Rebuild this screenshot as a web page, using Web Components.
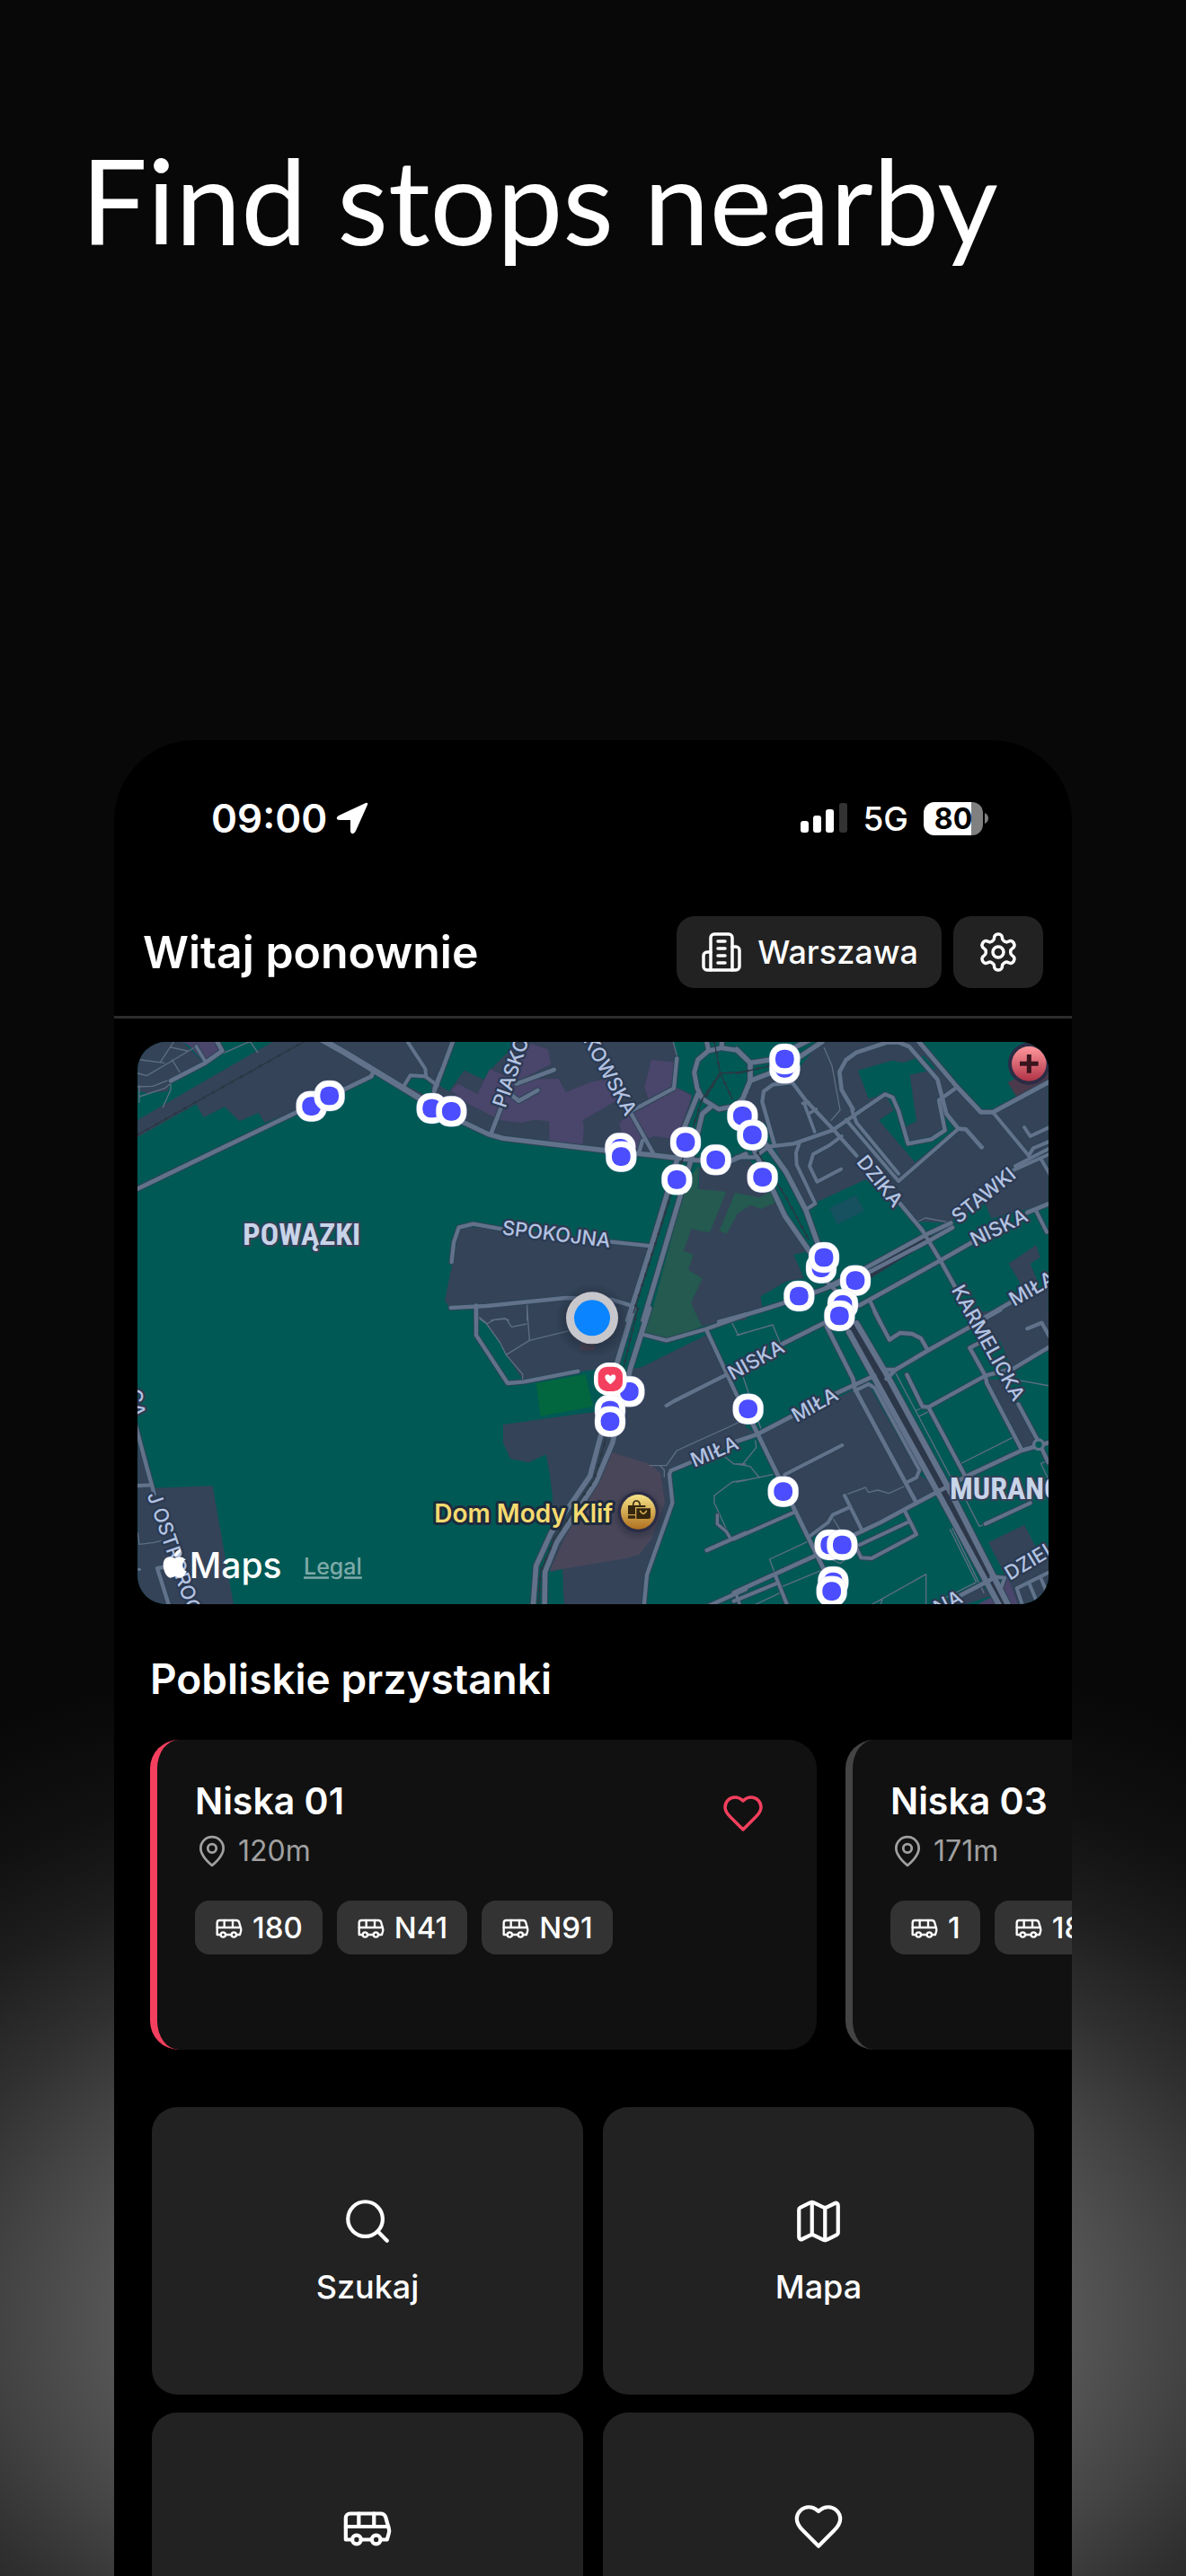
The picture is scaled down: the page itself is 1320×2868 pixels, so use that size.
<!DOCTYPE html>
<html lang="pl">
<head>
<meta charset="utf-8">
<meta name="viewport" content="width=device-width, initial-scale=1">
<title>Find stops nearby</title>
<style>
    body {
        margin: 0;
        background: #080808;
        color: #fff;
        font-family: Inter, "Noto Sans", sans-serif;
    }
</style>
</head>
<body>
<promo-page>
    <h1 slot="title">Find stops nearby</h1>
    <phone-frame>
        <status-bar time="09:00" network="5G" battery="80"></status-bar>
        <app-header city="Warszawa">Witaj ponownie</app-header>
        <nearby-map></nearby-map>
        <stop-list heading="Pobliskie przystanki">
            <stop-card name="Niska 01" distance="120m" lines="180,N41,N91" favourite></stop-card>
            <stop-card name="Niska 03" distance="171m" lines="1,180,N41"></stop-card>
        </stop-list>
        <tile-grid>
            <action-tile icon="search">Szukaj</action-tile>
            <action-tile icon="map">Mapa</action-tile>
            <action-tile icon="bus" label="Linie"></action-tile>
            <action-tile icon="heart" label="Ulubione"></action-tile>
        </tile-grid>
    </phone-frame>
</promo-page>

<script>
const ICONS = {
    building: `<path d="M6 22V4a2 2 0 0 1 2-2h8a2 2 0 0 1 2 2v18Z"/><path d="M6 12H4a2 2 0 0 0-2 2v6a2 2 0 0 0 2 2h2"/><path d="M18 9h2a2 2 0 0 1 2 2v9a2 2 0 0 1-2 2h-2"/><path d="M10 6h4M10 10h4M10 14h4M10 18h4"/>`,
    settings: `<path d="M12.22 2h-.44a2 2 0 0 0-2 2v.18a2 2 0 0 1-1 1.73l-.43.25a2 2 0 0 1-2 0l-.15-.08a2 2 0 0 0-2.73.73l-.22.38a2 2 0 0 0 .73 2.73l.15.1a2 2 0 0 1 1 1.72v.51a2 2 0 0 1-1 1.74l-.15.09a2 2 0 0 0-.73 2.73l.22.38a2 2 0 0 0 2.73.73l.15-.08a2 2 0 0 1 2 0l.43.25a2 2 0 0 1 1 1.73V20a2 2 0 0 0 2 2h.44a2 2 0 0 0 2-2v-.18a2 2 0 0 1 1-1.73l.43-.25a2 2 0 0 1 2 0l.15.08a2 2 0 0 0 2.73-.73l.22-.39a2 2 0 0 0-.73-2.73l-.15-.08a2 2 0 0 1-1-1.74v-.5a2 2 0 0 1 1-1.74l.15-.09a2 2 0 0 0 .73-2.73l-.22-.38a2 2 0 0 0-2.73-.73l-.15.08a2 2 0 0 1-2 0l-.43-.25a2 2 0 0 1-1-1.73V4a2 2 0 0 0-2-2z"/><circle cx="12" cy="12" r="3"/>`,
    pin: `<path d="M20 10c0 6-8 12-8 12s-8-6-8-12a8 8 0 0 1 16 0Z"/><circle cx="12" cy="10" r="3"/>`,
    bus: `<path d="M8 6v6M15 6v6M2 12h19.6"/><path d="M18 18h3s.5-1.7.8-2.8c.1-.4.2-.8.2-1.2 0-.4-.1-.8-.2-1.2l-1.4-5C20.1 6.8 19.1 6 18 6H4a2 2 0 0 0-2 2v10h3"/><circle cx="7" cy="18" r="2"/><path d="M9 18h5"/><circle cx="16" cy="18" r="2"/>`,
    search: `<circle cx="11" cy="11" r="8"/><path d="m21 21-4.3-4.3"/>`,
    map: `<path d="M14.106 5.553a2 2 0 0 0 1.788 0l3.659-1.83A1 1 0 0 1 21 4.619v12.764a1 1 0 0 1-.553.894l-4.553 2.277a2 2 0 0 1-1.788 0l-4.212-2.106a2 2 0 0 0-1.788 0l-3.659 1.83A1 1 0 0 1 3 19.381V6.618a1 1 0 0 1 .553-.894l4.553-2.277a2 2 0 0 1 1.788 0z"/><path d="M15 5.764v15M9 3.236v15"/>`,
    heart: `<path d="M19 14c1.49-1.46 3-3.21 3-5.5A5.5 5.5 0 0 0 16.5 3c-1.76 0-3 .5-4.5 2-1.5-1.5-2.74-2-4.5-2A5.5 5.5 0 0 0 2 8.5c0 2.3 1.5 4.05 3 5.5l7 7Z"/>`
};

class AppIcon extends HTMLElement {
    constructor() {
        super();
        this.attachShadow({mode: "open"});
    }

    connectedCallback() {
        this.shadowRoot.innerHTML = `
        <style>
            :host { display: inline-flex; flex: none; width: 48px; height: 48px; }
            svg { width: 100%; height: 100%; }
        </style>
        <svg viewBox="0 0 24 24" fill="none" stroke="currentColor" stroke-width="1.75"
            stroke-linecap="round" stroke-linejoin="round" aria-hidden="true">${ICONS[this.getAttribute("name")]}</svg>`;
    }
}

class PromoPage extends HTMLElement {
    constructor() {
        super();
        this.attachShadow({mode: "open"}).innerHTML = `
        <style>
            :host {
                display: flex;
                flex-direction: column;
                height: 100vh;
                overflow: hidden;
                background: radial-gradient(91% 25% at 50% 90%,
                    #5c5c5c 38%, #545454 45%, #434343 55%, #303030 65%, #1d1d1d 78%, #111 90%, #080808 108%);
            }
            header {
                padding: 145px 90px 523px;
            }
            ::slotted(h1) {
                margin: 0;
                font: 400 131px/156px Lato, "Open Sans", sans-serif;
            }
            main {
                display: flex;
                flex: 1;
                min-height: 0;
                padding: 0 127px;
            }
        </style>
        <header><slot name="title"></slot></header>
        <main><slot></slot></main>`;
    }
}

class PhoneFrame extends HTMLElement {
    constructor() {
        super();
        this.attachShadow({mode: "open"}).innerHTML = `
        <style>
            :host {
                display: block;
                flex: 1;
                min-width: 0;
                overflow: hidden;
                background: #000;
                border-radius: 90px 90px 0 0;
            }
        </style>
        <slot></slot>`;
    }
}

class StatusBar extends HTMLElement {
    constructor() {
        super();
        this.attachShadow({mode: "open"});
    }

    connectedCallback() {
        this.shadowRoot.innerHTML = `
        <style>
            :host {
                display: flex;
                align-items: center;
                justify-content: space-between;
                height: 174px;
                padding: 0 93px 0 108px;
            }
            div { display: flex; align-items: center; }
            .time { gap: 10px; font-size: 44px; font-weight: 600; }
            .state { gap: 17px; font-size: 37px; font-weight: 500; }
            .battery { gap: 2px; }
            .level {
                justify-content: center;
                width: 66px;
                height: 37px;
                border-radius: 12px;
                background: linear-gradient(90deg, #fff 80%, #808080 80%);
                color: #000;
                font-size: 32px;
                font-weight: 700;
            }
        </style>
        <div class="time">
            <span>${this.getAttribute("time")}</span>
            <svg width="36" height="36" viewBox="0 0 36 36" fill="#fff" aria-hidden="true"><path d="M33 1 3 15q-3 2-2 4 1 1 4 1h11v11q0 4 2 4 2 1 4-3L35 3q1-3-2-2Z"/></svg>
        </div>
        <div class="state">
            <svg width="52" height="34" viewBox="0 0 52 34" fill="#fff" aria-hidden="true">
                <rect y="20" width="9" height="13" rx="3"/><rect x="14" y="14" width="9" height="19" rx="3"/>
                <rect x="28" y="7" width="9" height="26" rx="3"/><rect x="43" width="9" height="33" rx="3" fill="#333"/>
            </svg>
            <span>${this.getAttribute("network")}</span>
            <div class="battery">
                <div class="level">${this.getAttribute("battery")}</div>
                <svg width="4" height="12" viewBox="0 0 4 12" fill="#808080" aria-hidden="true"><path d="M0 0q4 2 4 6t-4 6Z"/></svg>
            </div>
        </div>`;
    }
}

class AppHeader extends HTMLElement {
    constructor() {
        super();
        this.attachShadow({mode: "open"});
    }

    connectedCallback() {
        this.shadowRoot.innerHTML = `
        <style>
            :host {
                display: flex;
                align-items: center;
                gap: 13px;
                padding: 22px 32px 31px;
                border-bottom: 3px solid #2c2c2c;
            }
            h2 {
                flex: 1;
                margin: 0;
                font-size: 50px;
                font-weight: 600;
                line-height: 60px;
            }
            button {
                display: flex;
                align-items: center;
                gap: 16px;
                height: 80px;
                padding: 0 26px;
                border: 0;
                border-radius: 20px;
                background: #222;
                color: #fff;
                font: 500 36px/44px Inter, sans-serif;
            }
        </style>
        <h2><slot></slot></h2>
        <button type="button"><app-icon name="building"></app-icon>${this.getAttribute("city")}</button>
        <button type="button" aria-label="Ustawienia"><app-icon name="settings"></app-icon></button>`;
    }
}

/* Map data: the city is split in six sheets, each drawn from its own origin.
   Three map units are one pixel at full size. */
const NAVY = "#344358", TEAL = "#005955", PURPLE = "#4a456b", PARK = "#245a50";

const SHEETS = [
    {
        x: -39, y: -60,
        areas: [
            [NAVY, "M40 60H190L260 130 150 195 140 225 75 232 40 225Z"],
            [NAVY, "M40 320 490 60H1050V290L830 165 570 290 463 330 443 297 380 325 330 277 260 312 235 268 40 378Z"],
            [PURPLE, "M190 60H310L322 90 262 132 215 75Z"],
            [TEAL, "M935 205 960 177 1000 180 1030 212 1015 245Z"]
        ],
        rails: ["M40 370 620 45"],
        thin: ["M40 165 70 173 160 120 230 78M50 120 128 130M160 60 115 128M150 78 205 90M155 120 185 170M40 210 90 208 150 185M45 243 130 215 160 190M150 195V220L124 278M45 205V262M325 98 415 58 440 95"],
        roads: [
            [14, "M30 555 570 295 820 175 828 155"],
            [20, "M650 50 730 95 1050 290"],
            [14, "M300 50 322 90 262 132 150 190"],
            [11, "M235 75 265 125"],
            [12, "M938 55 1000 150 1003 178M930 205 950 172 1000 175 1040 205M1050 165 1030 215"]
        ],
        stops: [[620, 275], [680, 240], [1022, 282]]
    },
    {
        x: 981, y: -60,
        areas: [
            [NAVY, "M0 60H80L15 210 0 200Z"],
            [NAVY, "M290 60H810L820 110 815 210 870 235 840 445 740 435 240 380 120 325 0 250V190L60 225 110 155 175 185 200 150Z"],
            [PURPLE, "M330 65 390 85 400 135 300 185 425 183 450 228 530 195 600 180 620 255 505 322 510 345 505 405 395 395 393 325 345 320 300 330 230 322 120 265 65 222 90 200 155 235 195 150 250 175Z"],
            [PURPLE, "M735 120 815 128V212L870 240 820 385 745 375 720 385 700 430 635 365 628 330 665 300 730 265 712 210Z"],
            [PARK, "M895 470 890 550 1050 560V990H730L850 530Z"],
            [NAVY, "M895 480 1050 440V990H890L868 930 905 850 858 822 875 770 842 758 868 685 930 697 985 560 893 552Z"],
            [PARK, "M1015 563 1050 570V630L1020 640 985 702 962 690Z"],
            [NAVY, "M95 680H235L740 740 665 990H150V945H60L45 925 70 800Z"]
        ],
        rails: ["M945 60 965 165 905 250 830 480 675 965M965 165 1050 160M965 165 1005 250M920 240 965 165"],
        thin: ["M320 935V990M200 990 245 983 260 990M155 975 185 1000M808 60 822 112"],
        roads: [
            [16, "M0 245 100 325 190 368 240 382 560 420 740 438 880 455 1000 458 1050 435"],
            [14, "M75 50 10 225M235 275 200 365M285 200 410 153M265 235 292 257 355 222"],
            [13, "M820 115 810 215 665 292M665 295 740 430M705 390 695 425"],
            [15, "M1020 88 1065 130V190L1040 250 1010 275 960 285 905 250 888 215 878 162 890 120 925 90 970 80 1020 88M918 50 925 85M970 50V80"],
            [16, "M890 235 845 345 820 455 785 575 735 740 665 960 655 990M935 275 905 300 870 445 830 580 708 990"],
            [13, "M68 795 75 730 92 680 140 668 235 685M600 728 735 742M65 948 185 942 450 915 600 920 665 940M150 945V995M1050 970 960 995"]
        ],
        stops: [[67, 292], [631, 415], [634, 443], [849, 395], [820, 520], [950, 454]]
    },
    {
        x: 2001, y: -60,
        areas: [
            [NAVY, "M280 60H600L820 298H860L1040 200V600L850 650 830 600 700 665 605 660 550 610 430 520 235 610 130 420 85 260 90 220 180 180Z"],
            [TEAL, "M405 155 520 122 555 130 625 105 665 150 578 170 600 325 560 345 572 390 650 375 690 345 690 300 740 350 595 462 475 322 525 288 495 235 440 250Z"],
            [NAVY, "M50 195 110 175 190 185 90 220 110 330 60 340 20 250Z"],
            [NAVY, "M0 455H45L130 590 240 760 190 770 225 850 165 860 80 910 85 945 0 975Z"],
            [PARK, "M0 565 75 580 110 560 135 595 80 618 45 605 0 635Z"],
            ["#17505f", "M310 615 398 572 425 625 335 670Z"],
            ["#4a3a4c", "M905 195 1040 130V195L935 245Z"],
            [NAVY, "M908 800 1000 738 1013 780 980 800 1005 860 960 890Z"],
            [NAVY, "M820 990 1040 870V990Z"]
        ],
        rails: ["M70 430 165 580 240 720M0 165 180 125"],
        thin: ["M292 80 318 140 345 288 315 322M605 660 630 648 705 662"],
        roads: [
            [16, "M0 85 45 130 110 120 250 50M45 130V190L20 250M45 190 150 150 285 60"],
            [13, "M125 400 85 260 90 225 120 203 185 195 230 255 320 350 400 440M545 600 620 690 680 790 730 880"],
            [17, "M100 405 165 495 230 620 280 760M60 425 160 640 250 770"],
            [13, "M0 445 60 445 105 410 190 400 320 355 495 235 520 245 540 290 572 400 650 385 695 355 675 255 730 215"],
            [11, "M220 265 240 262 M225 265 260 360M240 300 265 285"],
            [12, "M350 375 310 405 255 435 243 475 268 527 348 485M210 395 198 430 200 470 262 600 230 620"],
            [14, "M388 285 350 220 343 160 365 120 400 95 500 62 540 62 575 75 670 185 700 300 740 350 765 352 818 412"],
            [12, "M385 290 400 330 540 500M365 320 540 525 735 355"],
            [15, "M600 50 735 210 815 295H855L1050 190"],
            [12, "M855 295 975 440 990 415 1050 390M960 345 980 375 1050 342M930 475 1050 412M920 490 1050 432M1015 450 1050 510M1000 625 1035 695"],
            [14, "M715 665 640 700 440 810 300 880M720 680 640 725 450 825 240 905"],
            [14, "M1050 597 970 630M785 730 680 790 410 940M0 980 100 950 180 925 260 895M820 985 915 930"],
            [12, "M445 925 480 1000M290 850 340 900"]
        ],
        stops: [[160, 148], [160, 117], [19, 307], [52, 371], [86, 512], [282, 815], [291, 780], [208, 909], [396, 857], [354, 937], [343, 975]]
    },
    {
        x: -39, y: 900,
        areas: [
            [NAVY, "M40 380 90 590 290 583 360 980H40Z"]
        ],
        rails: [],
        thin: ["M40 740 45 778 95 772 140 760"],
        roads: [
            [13, "M30 370 70 520 95 610M30 583 80 580M135 853 105 858 145 985"],
            [10, "M44 862 46 862"]
        ],
        stops: []
    },
    {
        x: 981, y: 900,
        areas: [
            [NAVY, "M150 0H680L620 190 545 195 305 228 250 145 230 105 185 45 155 20Z"],
            [PARK, "M733 0H880L905 50 785 97 710 75Z"],
            [NAVY, "M880 0H1050V10L905 50Z"],
            ["#02663f", "M350 240 515 210 540 318 365 350Z"],
            [NAVY, "M240 378 550 335 660 195 705 185 920 78 1030 290H1050V430L865 510 790 540 805 640 720 880 710 980H443L438 860 400 870 405 620 395 540 383 478 325 505 265 493 240 440Z"],
            ["#4a465a", "M600 470 730 510 765 540 780 640 735 760 695 812 650 825 395 868 500 640Z"],
            ["#4a4150", "M498 105H545V130H498Z"]
        ],
        rails: ["M690 -10 590 400 545 560 410 760 365 870 358 980"],
        thin: ["M155 20 185 42 230 105 250 145 305 210V228M185 42 210 28 250 25 268 52 318 42M320 -10 328 97 250 145M328 97 460 65M1050 360 985 390 820 465 785 515H730M765 517 778 530V552M980 485 1010 510H1050M1050 563 1005 570 945 615V640L1000 760M1000 30 1025 80 1050 70"],
        roads: [
            [17, "M675 -10 615 190 570 400 530 550 400 740 350 850 340 985M728 -10 665 190 605 440 550 570 420 770 380 870 378 985"],
            [13, "M150 -20V80L255 240 310 235 490 200M710 78 785 97 915 60 1050 12M920 65 1020 280M785 315 810 300 985 212"],
            [13, "M865 505 800 532 795 545 805 640 720 880 710 985M920 798 1050 740M930 982 1050 928"],
            [10, "M955 680V710L985 735 1000 760M1020 950 1032 985"]
        ],
        stops: [[661, 268], [597, 330], [597, 368]]
    },
    {
        x: 2001, y: 900,
        areas: [
            [NAVY, "M0 370 60 405 0 430Z"],
            [NAVY, "M70 415 395 260 440 245 610 545 680 600 600 640 415 735 300 745 240 750Z"],
            [NAVY, "M750 0H1050V120L925 205 880 100 800 70Z"],
            [NAVY, "M830 225 890 230 1000 440 950 465Z"],
            [NAVY, "M840 772 960 713 1000 790 890 870Z"],
            [NAVY, "M890 870 1050 780V980H935Z"],
            [NAVY, "M690 980 820 915 850 950 760 980Z"],
            [PURPLE, "M800 980 850 955 905 890 940 980Z"]
        ],
        rails: [],
        thin: ["M530 205 715 555M600 330 640 315M610 350 640 335M745 510 920 422M760 620 810 718 850 700M712 728 800 905M720 725 825 940M800 905 690 960M110 828 235 770M110 828 125 870M320 690 345 730M370 610 430 588 440 605 470 597 508 608 565 582M0 570 120 545M0 510 45 518 75 555M20 510 65 455 62 432M0 80 120 45 145 105M20 215 80 390M150 920 290 862M632 980V878L450 980M488 958 480 980M320 830 345 842 360 830M940 230 1050 250M1035 500 1015 508 1040 560M60 980 150 938"],
        roads: [
            [14, "M300 50 388 225 395 260 600 640M150 110 300 35M-10 437 70 410 185 350M330 275 460 215"],
            [12, "M395 265 440 243 460 255 610 530 600 555 570 570"],
            [14, "M490 195H530L640 130 880 -5M500 225 530 195"],
            [13, "M460 0 510 95 545 72 585 75 615 90 635 125"],
            [14, "M1050 436 950 465 780 545 600 640 480 705 395 745"],
            [13, "M568 212 620 318 640 320 830 215 925 190 1050 115M640 320 760 545M805 108 778 122 830 215 835 240 950 460M940 310 1010 440 1040 505M970 58 1018 38 1045 85"],
            [12, "M830 710 980 640M160 545 352 447M-10 760 190 672M245 750 305 705 320 680 375 655M360 615 420 735"],
            [14, "M40 350 70 410 290 860M265 815 -10 940"],
            [12, "M130 910 -10 968M130 885 170 985M410 780 570 705M560 665 600 745 450 825 415 823 395 780"],
            [14, "M740 952 850 895"],
            [12, "M850 885 895 890 880 930M1050 868 935 925 955 985M975 905 1008 985M1015 890 1040 950"],
            [19, "M375 70 680 620 878 985M400 40 500 210 712 600 908 985"]
        ],
        stops: [[38, 326], [155, 602], [311, 780], [352, 780], [322, 903], [317, 935]]
    }
];

// text, sheet, x, y, angle, anchor
const STREETS = [
    ["PIASKOWA", 1, 226, 276, -71, "start"],
    ["OKOWSKA", 1, 668, 300, 61, "end"],
    ["SPOKOJNA", 1, 418, 702, 7, "middle"],
    ["DZIKA", 2, 478, 525, 51, "middle"],
    ["STAWKI", 2, 824, 572, -39, "middle"],
    ["NISKA", 2, 875, 680, -26, "middle"],
    ["MIŁA", 2, 915, 925, -30, "start"],
    ["KARMELICKA", 2, 840, 1065, 61, "middle"],
    ["CA", 3, 42, 352, 82, "end"],
    ["J OSTROROGA", 3, 92, 605, 71, "start"],
    ["NISKA", 4, 1084, 162, -29, "middle"],
    ["MIŁA", 4, 945, 468, -23, "middle"],
    ["MIŁA", 5, 260, 312, -29, "middle"],
    ["DZIELNA", 5, 900, 880, -31, "start"],
    ["NA", 5, 748, 950, -27, "end"]
];

class NearbyMap extends HTMLElement {
    constructor() {
        super();
        this.attachShadow({mode: "open"});
    }

    connectedCallback() {
        const layer = draw => SHEETS.map(s => `<g transform="translate(${s.x} ${s.y})">${draw(s)}</g>`).join("");
        const areas = layer(s => s.areas.map(([fill, d]) => `<path fill="${fill}" d="${d}"/>`).join(""));
        const thin = layer(s => s.thin.map(d => `<path class="thin" d="${d}"/>`).join(""));
        const rails = layer(s => s.rails.map(d => `<path class="rail" d="${d}"/><path class="ties" d="${d}"/>`).join(""));
        const casing = layer(s => s.roads.map(([w, d]) => `<path class="casing" stroke-width="${w + 6}" d="${d}"/>`).join(""));
        const roads = layer(s => s.roads.map(([w, d]) => `<path class="road" stroke-width="${w}" d="${d}"/>`).join(""));
        const stops = layer(s => s.stops.map(([x, y]) => `
            <rect x="${x - 51}" y="${y - 51}" width="102" height="102" rx="45" fill="#fff" stroke="#c9c8f5" stroke-width="1"/>
            <rect x="${x - 31}" y="${y - 31}" width="62" height="62" rx="27" fill="#4b4dff"/>`).join(""));
        const streets = STREETS.map(([text, sheet, x, y, angle, anchor]) => `
            <text class="street" text-anchor="${anchor}" transform="translate(${SHEETS[sheet].x + x} ${SHEETS[sheet].y + y}) rotate(${angle})" dy="23">${text}</text>`).join("");

        this.shadowRoot.innerHTML = `
        <style>
            :host {
                display: block;
                margin: 26px 26px 0;
                overflow: hidden;
                border-radius: 32px;
            }
            svg { display: block; width: 100%; background: ${TEAL}; }
            path { stroke-linecap: round; stroke-linejoin: round; }
            .thin { fill: none; stroke: #5d6e82; stroke-width: 4; }
            .rail { fill: none; stroke: #2a3844; stroke-width: 4; }
            .ties { fill: none; stroke: #2a3844; stroke-width: 9; stroke-dasharray: 1 35; }
            .casing { fill: none; stroke: #2d4556; }
            .road { fill: none; stroke: #61728a; }
            .avenue { fill: none; stroke: #2c3749; stroke-width: 24; }
            text { paint-order: stroke; stroke-linejoin: round; }
            .street { font: 500 66px Inter, sans-serif; fill: #b3c3e2; stroke: #2b3a52; stroke-width: 14px; }
            .district { font: 700 102px "Liberation Sans Narrow", "Roboto Condensed", Roboto, sans-serif; fill: #c8d4e8; stroke: #344159; stroke-width: 12px; }
            .place { font: 600 84px Inter, sans-serif; fill: #f5db70; stroke: #1d2b3d; stroke-width: 18px; }
            .brand { font: 500 117px Inter, sans-serif; fill: #fff; }
            .legal { font: 500 75px Inter, sans-serif; fill: #7eaaa8; text-decoration: underline; }
        </style>
        <svg viewBox="0 0 3042 1878" role="group" aria-label="Mapa okolicy">
            <defs>
                <linearGradient id="gold" x2="0" y2="1"><stop stop-color="#f6e387"/><stop offset="1" stop-color="#b0701f"/></linearGradient>
                <linearGradient id="red" x2="0" y2="1"><stop stop-color="#ff989c"/><stop offset="1" stop-color="#b03347"/></linearGradient>
                <radialGradient id="shade"><stop offset=".5" stop-color="#1c2535" stop-opacity=".6"/><stop offset="1" stop-color="#1c2535" stop-opacity="0"/></radialGradient>
            </defs>
            ${areas}${thin}${casing}
            <path class="avenue" d="M2389 955 2694 1500 2894 1885M2440 780 2640 655"/>
            ${roads}${rails}
            <circle cx="3009" cy="1345" r="16" fill="${TEAL}" stroke="#61728a" stroke-width="10"/>
            ${streets}
            <text class="district" x="352" y="677">POWĄZKI</text>
            <text class="district" x="2712" y="1528">MURANÓW</text>
            <g transform="translate(2977 73)">
                <circle r="70" fill="#2b2c45"/><circle r="58" fill="url(#red)"/>
                <path d="M-31 0H31M0 -31V31" stroke="#39151d" stroke-width="15" style="stroke-linecap:butt"/>
            </g>
            <g transform="translate(1672 1570)">
                <circle r="90" cy="8" fill="url(#shade)"/><circle r="68" fill="#2b2c45"/><circle r="58" fill="url(#gold)"/>
                <path d="M-34 -22H24V-16H-10V8H-34ZM-34 12H-10V22H-34ZM-6 -12H41V17Q41 23 35 23H-6Z" fill="#33260d"/>
                <path d="M-17 -22Q-17 -37 -6 -37T6 -22" fill="none" stroke="#33260d" stroke-width="5"/>
                <path d="M7 -3Q17 15 27 -3" fill="none" stroke="#dcb454" stroke-width="5"/>
            </g>
            <text class="place" x="991" y="1605">Dom Mody Klif</text>
            ${stops}
            <g transform="translate(1579 1126)">
                <rect x="-55" y="-55" width="110" height="110" rx="48" fill="#fff"/>
                <rect x="-41" y="-41" width="82" height="82" rx="30" fill="#f43f5e"/>
                <path d="M0 18C-12 8 -18 2 -18 -6 -18 -17 -5 -18 0 -9 5 -18 18 -17 18 -6 18 2 12 8 0 18Z" fill="#fff"/>
            </g>
            <circle cx="1518" cy="930" r="125" fill="url(#shade)"/>
            <circle cx="1518" cy="922" r="87" fill="#c7c7cc"/>
            <circle cx="1518" cy="922" r="60" fill="#0a84ff"/>
            <path transform="translate(86 1695)" fill="#fff" d="M58 0C59 11 50 23 38 23 37 11 47 1 58 0ZM72 32C66 27 59 25 54 25 48 25 43 29 38 29 33 29 28 25 21 25 9 25 0 36 0 52 0 72 12 95 24 95 30 95 33 91 40 91 47 91 49 95 56 95 66 95 74 83 78 73 70 70 65 63 65 53 65 44 69 37 76 33Z"/>
            <text class="brand" x="173" y="1791">Maps</text>
            <a href="#legal"><text class="legal" x="555" y="1780">Legal</text></a>
        </svg>`;
    }
}

class StopList extends HTMLElement {
    constructor() {
        super();
        this.attachShadow({mode: "open"});
    }

    connectedCallback() {
        this.shadowRoot.innerHTML = `
        <style>
            :host { display: block; margin-top: 55px; padding-left: 40px; }
            h3 {
                margin: 0 0 40px;
                font-size: 46px;
                font-weight: 600;
                line-height: 56px;
            }
            .row {
                display: flex;
                gap: 32px;
                overflow: hidden;
            }
        </style>
        <h3>${this.getAttribute("heading")}</h3>
        <div class="row"><slot></slot></div>`;
    }
}

class StopCard extends HTMLElement {
    constructor() {
        super();
        this.attachShadow({mode: "open"});
    }

    connectedCallback() {
        const favourite = this.hasAttribute("favourite");
        const lines = this.getAttribute("lines").split(",");
        this.shadowRoot.innerHTML = `
        <style>
            :host {
                display: flex;
                flex: none;
                align-items: flex-start;
                justify-content: space-between;
                box-sizing: border-box;
                width: 742px;
                min-height: 345px;
                padding: 44px 42px;
                border-left: 8px solid ${favourite ? "#f43f5e" : "#444"};
                border-radius: 32px;
                background: #111;
            }
            h4 {
                margin: 0 0 12px;
                font-size: 41px;
                font-weight: 600;
                line-height: 48px;
            }
            p {
                display: flex;
                align-items: center;
                gap: 10px;
                margin: 0 0 35px;
                color: #a0a0a0;
                font-size: 32px;
                line-height: 40px;
            }
            p app-icon { width: 38px; height: 38px; }
            .lines { display: flex; gap: 16px; }
            button {
                display: flex;
                padding: 14px 16px;
                border: 0;
                background: none;
                color: #f43f5e;
            }
        </style>
        <div>
            <h4>${this.getAttribute("name")}</h4>
            <p><app-icon name="pin"></app-icon>${this.getAttribute("distance")}</p>
            <div class="lines">${lines.map(line => `<line-chip>${line}</line-chip>`).join("")}</div>
        </div>
        ${favourite ? `<button type="button" aria-label="Ulubiony"><app-icon name="heart"></app-icon></button>` : ""}`;
    }
}

class LineChip extends HTMLElement {
    constructor() {
        super();
        this.attachShadow({mode: "open"}).innerHTML = `
        <style>
            :host {
                display: flex;
                align-items: center;
                gap: 10px;
                height: 60px;
                padding: 0 22px;
                border-radius: 16px;
                background: #333;
                font-size: 33px;
                font-weight: 500;
            }
            app-icon { width: 32px; height: 32px; }
        </style>
        <app-icon name="bus"></app-icon><slot></slot>`;
    }
}

class TileGrid extends HTMLElement {
    constructor() {
        super();
        this.attachShadow({mode: "open"}).innerHTML = `
        <style>
            :host {
                display: grid;
                grid-template-columns: 1fr 1fr;
                gap: 20px 22px;
                padding: 64px 42px;
            }
        </style>
        <slot></slot>`;
    }
}

class ActionTile extends HTMLElement {
    constructor() {
        super();
        this.attachShadow({mode: "open"});
    }

    connectedCallback() {
        const label = this.getAttribute("label");
        this.shadowRoot.innerHTML = `
        <style>
            :host { display: grid; }
            button {
                display: flex;
                flex-direction: column;
                align-items: center;
                gap: 22px;
                min-height: 320px;
                padding: 98px 24px;
                border: 0;
                border-radius: 28px;
                background: #222;
                color: #fff;
                font: 500 36px/44px Inter, sans-serif;
            }
            app-icon { width: 58px; height: 58px; }
        </style>
        <button type="button"${label ? ` aria-label="${label}"` : ""}>
            <app-icon name="${this.getAttribute("icon")}"></app-icon>
            <slot></slot>
        </button>`;
    }
}

customElements.define("app-icon", AppIcon);
customElements.define("promo-page", PromoPage);
customElements.define("phone-frame", PhoneFrame);
customElements.define("status-bar", StatusBar);
customElements.define("app-header", AppHeader);
customElements.define("nearby-map", NearbyMap);
customElements.define("stop-list", StopList);
customElements.define("stop-card", StopCard);
customElements.define("line-chip", LineChip);
customElements.define("tile-grid", TileGrid);
customElements.define("action-tile", ActionTile);
</script>
</body>
</html>
